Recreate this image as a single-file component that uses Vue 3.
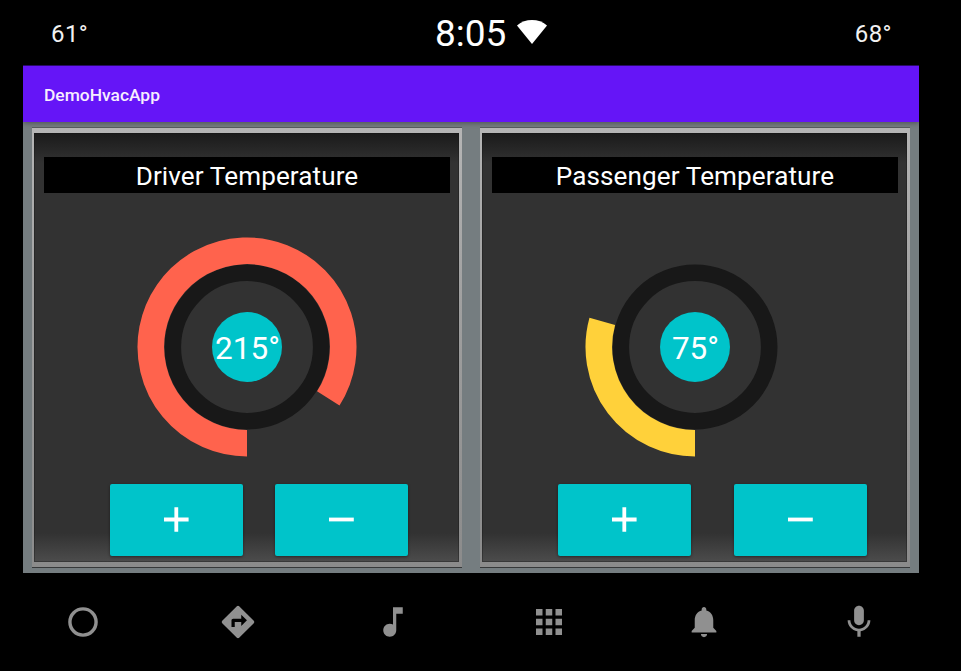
<script setup>
const zones = [
  { name: 'driver', title: 'Driver Temperature', value: 215, color: '#ff634d' },
  { name: 'passenger', title: 'Passenger Temperature', value: 75, color: '#ffd13a' },
]

const C = 110
const R = 96.2

// The arc starts at the bottom of the dial and runs clockwise; 256 is a full turn.
function arc(value) {
  const a = (value / 256) * 2 * Math.PI
  const x = C - R * Math.sin(a)
  const y = C + R * Math.cos(a)
  return `M${C} ${C + R}A${R} ${R} 0 ${a > Math.PI ? 1 : 0} 1 ${x} ${y}`
}

const box = '-0.3 -0.3 24.6 24.6'
const nav = [
  { name: 'home', box, path: 'M12 2.9a9.1 9.1 0 1 0 0 18.2a9.1 9.1 0 0 0 0-18.2zm0 2.1a7 7 0 1 1 0 14a7 7 0 0 1 0-14z' },
  { name: 'directions', box, path: 'M21.71 11.29l-9-9a.996.996 0 0 0-1.41 0l-9 9a.996.996 0 0 0 0 1.41l9 9c.39.39 1.02.39 1.41 0l9-9a.996.996 0 0 0 0-1.41zM14 14.5V12h-4v3H8v-4c0-.55.45-1 1-1h5V7.5l3.5 3.5-3.5 3.5z' },
  { name: 'music', box, path: 'M12 3v10.55c-.59-.34-1.27-.55-2-.55-2.21 0-4 1.79-4 4s1.79 4 4 4 4-1.79 4-4V7h4V3h-6z' },
  { name: 'apps', box, path: 'M4 8h4V4H4v4zm6 12h4v-4h-4v4zm-6 0h4v-4H4v4zm0-6h4v-4H4v4zm6 0h4v-4h-4v4zm6-10v4h4V4h-4zm-6 4h4V4h-4v4zm6 6h4v-4h-4v4zm0 6h4v-4h-4v4z' },
  { name: 'notifications', box: '-0.95 -0.75 25.9 25.9', path: 'M12 22c1.1 0 2-.9 2-2h-4c0 1.1.89 2 2 2zm6-6v-5c0-3.07-1.64-5.64-4.5-6.32V4c0-.83-.67-1.5-1.5-1.5s-1.5.67-1.5 1.5v.68C7.63 5.36 6 7.92 6 11v5l-2 2v1h16v-1l-2-2z' },
  { name: 'voice', box, path: 'M12 14c1.66 0 2.99-1.34 2.99-3L15 5c0-1.66-1.34-3-3-3S9 3.34 9 5v6c0 1.66 1.34 3 3 3zm5.3-3c0 3-2.54 5.1-5.3 5.1S6.7 14 6.7 11H5c0 3.41 2.72 6.23 6 6.72V21h2v-3.28c3.28-.48 6-3.3 6-6.72h-1.7z' },
]
</script>

<template>
  <div class="screen">
    <div class="status">
      <span class="outside">61°</span>
      <div class="clock">
        <span>8:05</span>
        <svg class="wifi" viewBox="0 0 30 24"><path d="M0 5.4Q6.5 0 15 0Q23.500 0 30 5.4L15 24Z" fill="#fff" /></svg>
      </div>
      <span class="outside">68°</span>
    </div>

    <main class="app">
      <header class="bar">DemoHvacApp</header>
      <div class="zones">
        <section v-for="z in zones" :key="z.name" class="frame" :class="z.name">
          <div class="panel">
            <h2 class="title">{{ z.title }}</h2>
            <div class="dial">
              <svg class="gauge" viewBox="0 0 220 220">
                <circle :cx="C" :cy="C" r="74.2" fill="none" stroke="#181818" stroke-width="16.6" />
                <path :d="arc(z.value)" fill="none" :stroke="z.color" stroke-width="26.6" />
                <circle :cx="C" :cy="C" r="35" fill="#00c4ca" />
              </svg>
              <span class="value">{{ z.value }}°</span>
            </div>
            <div class="buttons">
              <button class="btn" aria-label="Increase">
                <svg viewBox="0 0 25 25"><path d="M0 12.500H24.600M12.300 0.200V24.800" stroke="#fff" stroke-width="3.8" /></svg>
              </button>
              <button class="btn" aria-label="Decrease">
                <svg viewBox="0 0 25 25"><path d="M0 12.500H24.800" stroke="#fff" stroke-width="3.8" /></svg>
              </button>
            </div>
          </div>
        </section>
      </div>
    </main>

    <nav class="nav">
      <a v-for="n in nav" :key="n.name" class="nav-item">
        <svg :viewBox="n.box" width="40" height="40"><path :d="n.path" fill="#909090" /></svg>
      </a>
    </nav>
  </div>
</template>

<style>
body {
  margin: 0;
  background: #000;
}
</style>

<style scoped>
.screen {
  width: 961px;
  height: 671px;
  overflow: hidden;
  background: #000;
  color: #fff;
  font-family: Roboto, "Liberation Sans", sans-serif;
  display: flex;
  flex-direction: column;
}
.status {
  height: 65px;
  box-sizing: border-box;
  padding: 2px 69px 0 51px;
  display: grid;
  grid-template-columns: 384px auto 1fr;
  align-items: center;
}
.outside {
  font-size: 24px;
  letter-spacing: 0.4px;
  color: #f2f2f2;
}
.outside:last-child {
  text-align: right;
}
.clock {
  display: flex;
  align-items: center;
  gap: 10.6px;
  font-size: 37px;
  line-height: 44px;
}
.wifi {
  width: 30px;
  height: 24px;
  margin-top: -3px;
}
.app {
  width: 896px;
  height: 508px;
  margin-left: 23px;
  background: #757d80;
  display: flex;
  flex-direction: column;
}
.bar {
  height: 57px;
  box-sizing: border-box;
  border-top: 1px solid #290a68;
  padding: 1px 0 0 21px;
  background: #6515f7;
  display: flex;
  align-items: center;
  font-size: 17.4px;
  font-weight: 500;
  color: #f7eeff;
  box-shadow: 0 1px 5px rgba(0, 0, 0, 0.35);
}
.zones {
  flex: 1;
  display: flex;
  gap: 18px;
  padding: 6px 9px;
}
.frame {
  flex: 1;
  box-sizing: border-box;
  height: 439px;
  padding: 5px 3px 5px 2px;
  background: linear-gradient(#b5b5b5, #a0a0a0 40%, #8b8b8b);
  box-shadow: 0 -1px 0 #575b5c, 0 1px 0 #363839;
}
.panel {
  height: 429px;
  box-sizing: border-box;
  padding: 24px 9px 0 10px;
  background: linear-gradient(#1a1a1a, #323232 30px, #323232 400px, #4c4c4c);
  box-shadow: inset 0 0 0 1px rgba(20, 20, 20, 0.35);
  display: flex;
  flex-direction: column;
}
.title {
  margin: 0;
  height: 36px;
  line-height: 39px;
  background: #000;
  text-align: center;
  font-size: 26.1px;
  font-weight: 400;
  letter-spacing: 0.1px;
}
.dial {
  display: grid;
  place-items: center;
  width: 220px;
  height: 220px;
  margin: 44px auto 27px;
}
.gauge,
.value {
  grid-area: 1 / 1;
}
.gauge {
  width: 220px;
  height: 220px;
}
.value {
  font-size: 31.5px;
  line-height: 38px;
  padding: 4px 0 0 1px;
}
.buttons {
  display: flex;
  gap: 32px;
  padding-left: 66px;
}
.passenger .buttons {
  gap: 43px;
}
.btn {
  width: 133px;
  height: 72px;
  box-sizing: border-box;
  border: 0;
  border-radius: 2px;
  padding: 0 0 1px;
  background: #00c4ca;
  box-shadow: 0 1px 3px rgba(0, 0, 0, 0.45);
  display: flex;
  align-items: center;
  justify-content: center;
}
.btn svg {
  width: 25px;
  height: 25px;
}
.nav {
  width: 932px;
  height: 98px;
  margin-left: 5px;
  display: grid;
  grid-template-columns: repeat(6, 1fr);
}
.nav-item {
  display: flex;
  align-items: center;
  justify-content: center;
}
.nav-item svg {
  display: block;
}
</style>
